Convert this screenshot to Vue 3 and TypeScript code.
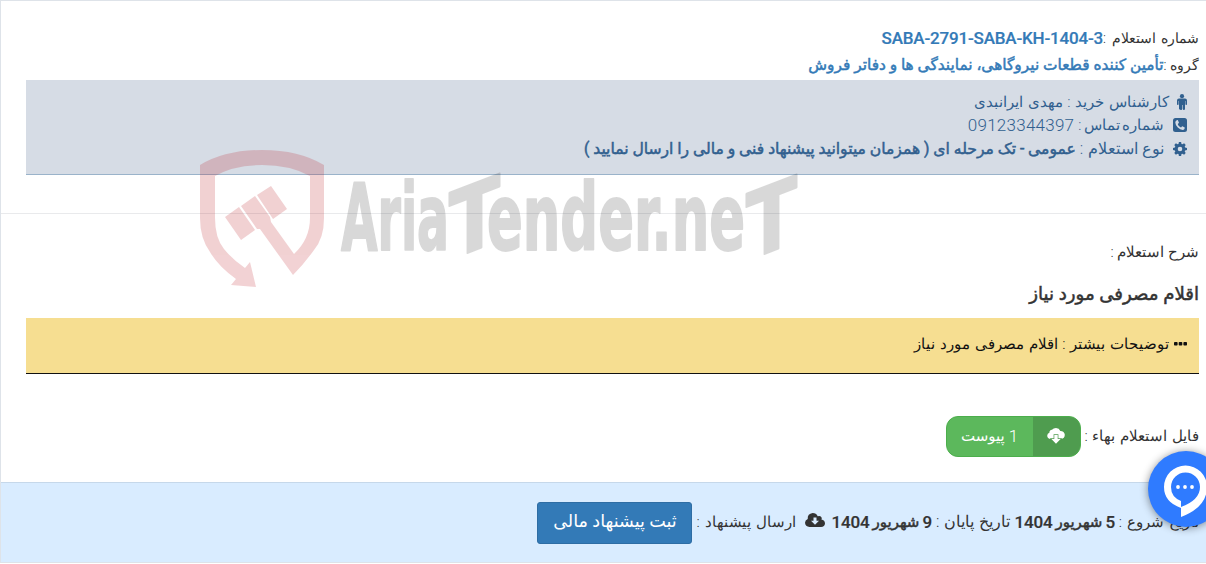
<script setup lang="ts">
import { ref } from 'vue'

const inquiryNumber = ref('SABA-2791-SABA-KH-1404-3')
const group = ref('تأمین کننده قطعات نیروگاهی، نمایندگی ها و دفاتر فروش')
const buyer = ref('مهدی ایرانبدی')
const phone = ref('09123344397')
const inquiryType = ref('عمومی - تک مرحله ای ( همزمان میتوانید پیشنهاد فنی و مالی را ارسال نمایید )')
const title = ref('اقلام مصرفی مورد نیاز')
const attachmentCount = ref(1)
</script>

<template>
  <div class="inquiry-page" dir="rtl">
    <section class="summary">
      <div class="row number-row">
        <span class="label l-number">شماره استعلام :</span>
        <bdi class="latin strong link code">{{ inquiryNumber }}</bdi>
      </div>
      <div class="row group-row">
        <span class="label l-group">گروه :</span>
        <span class="strong link group">{{ group }}</span>
      </div>
      <div class="info-box">
        <div class="row info-row">
          <svg class="icon-male" viewBox="0 0 10 16" width="10" height="16">
            <circle cx="5" cy="2.2" r="2.1" />
            <path d="M2 4.6h6q2 0 2 2v3.6q0 .8-.8.8t-.8-.8V7h-.4v8q0 1-1.1 1t-1.1-1v-4h-.6v4q0 1-1.1 1T2 15V7h-.4v3.2q0 .8-.8.8t-.8-.8V6.600q0-2 2-2z" />
          </svg>
          <span class="label l-buyer">کارشناس خرید : {{ buyer }}</span>
        </div>
        <div class="row info-row">
          <svg class="icon-phone" viewBox="0 0 14 14" width="14" height="14">
            <path fill-rule="evenodd" d="M2.500 0h9Q14 0 14 2.500v9q0 2.500-2.500 2.500h-9Q0 14 0 11.500v-9Q0 0 2.500 0zM4.200 2.100Q2.300 2.700 2.300 4.500q.1 2.700 2.500 5t5 2.400q1.600-.2 2-2l-.1-.5-2.200-1.200q-.4-.1-1.400 1.200-.6.200-2-1.100T4.800 6.100q0-.3 1-1.200.2-.3.100-.5L4.900 2.300q-.1-.3-.7-.2z" />
          </svg>
          <span class="label l-phone">شماره تماس :</span>
          <span class="latin phone">{{ phone }}</span>
        </div>
        <div class="row info-row">
          <svg class="icon-cog" viewBox="0 0 14 14" width="14" height="14">
            <path fill-rule="evenodd" d="M5.900 0h2.200l.4 1.900 1 .4 1.600-1 1.600 1.600-1 1.600.4 1 1.900.4v2.200l-1.900.4-.4 1 1 1.600-1.600 1.600-1.600-1-1 .4-.4 1.900H5.900l-.4-1.900-1-.4-1.600 1-1.600-1.600 1-1.600-.4-1L0 8.100V5.900l1.900-.4.4-1-1-1.600 1.600-1.600 1.600 1 1-.4zM7 4.700a2.300 2.300 0 1 0 0 4.600 2.300 2.300 0 0 0 0-4.600z" />
          </svg>
          <span class="label l-type">نوع استعلام :</span>
          <span class="strong type">{{ inquiryType }}</span>
        </div>
      </div>
    </section>

    <section class="description">
      <div class="row desc-row"><span class="label l-desc">شرح استعلام :</span></div>
      <h4>{{ title }}</h4>
      <div class="row note-box">
        <svg class="icon-dots" viewBox="0 0 13 4" width="13" height="4">
          <rect width="3.600" height="3.600" rx=".8" />
          <rect x="4.700" width="3.600" height="3.600" rx=".8" />
          <rect x="9.400" width="3.600" height="3.600" rx=".8" />
        </svg>
        <span class="label l-note">توضیحات بیشتر : {{ title }}</span>
      </div>
      <div class="row file-row">
        <span class="label l-file">فایل استعلام بهاء :</span>
        <button type="button" class="attachment">
          <span class="attachment-icon">
            <svg viewBox="0 0 18 16" width="18" height="16">
              <path d="M3.800 11Q.3 10.700.2 7.800.3 5.300 2.400 4.800 2.300 2.200 5 1.800 6.400.1 9 .1q3.200.1 4.300 2.800 4.100.2 4.500 3.900-.1 3.800-3.800 4.200z" />
              <path class="arrow" d="M7.300 7h3.400v4h2.900L9 15.800 4.400 11h2.900z" />
            </svg>
          </span>
          <span class="attachment-text"><span class="latin">{{ attachmentCount }}</span><span class="persian">پیوست</span></span>
        </button>
      </div>
    </section>

    <footer class="row">
      <span class="label l-start">تاریخ شروع :</span>
      <span class="date"><b class="latin">5</b><b class="month">شهریور</b><b class="latin">1404</b></span>
      <span class="label l-end">تاریخ پایان :</span>
      <span class="date"><b class="latin">9</b><b class="month">شهریور</b><b class="latin">1404</b></span>
      <svg class="icon-cloud" viewBox="0 0 20 14" width="20" height="14">
        <path fill-rule="evenodd" d="M4.500 14Q.3 13.700 0 9.800q.1-2.700 2.700-3.900Q2.400.7 7.700 0q3.500 0 5 3.300 3-1.300 4 1.400.2.900-.3 1.800Q19.900 7.300 20 10.400 19.700 13.800 16 14zM8.500 4.500v3.300H6l4 4 4-4h-2.500V4.500z" />
      </svg>
      <span class="label l-send">ارسال پیشنهاد :</span>
      <button type="button" class="submit"><span>ثبت پیشنهاد مالی</span></button>
    </footer>

    <svg class="watermark" viewBox="190 140 620 155" width="620" height="155" direction="ltr">
      <g class="shield">
        <path d="M200 165Q225 150 262 150T324 165V218Q324 238 314 250 304 264 293 275L260 229 257 229 241 206 255 196 270 217 271 222 294 254Q310 239 310 218V176Q290 165 262 165T215 176V218Q215 238 224 249 233 260 245 268L250 262 256 287 231 285 236 279Q218 266 210 252 200 238 200 218z" />
        <path d="M225 217 239 207 255 230 241 240zM257 195 271 186 287 209 273 219z" />
      </g>
      <g class="wordmark">
        <text x="341" y="250" textLength="108" lengthAdjust="spacingAndGlyphs">Aria</text>
        <text transform="translate(449 260) skewY(-21)" textLength="51" lengthAdjust="spacingAndGlyphs">T</text>
        <text x="487" y="250" textLength="258" lengthAdjust="spacingAndGlyphs">ender.ne</text>
        <text transform="translate(746 261) skewY(-21)" textLength="51" lengthAdjust="spacingAndGlyphs">T</text>
      </g>
    </svg>

    <div class="chat">
      <svg viewBox="0 0 76 76" width="76" height="76">
        <path fill-rule="evenodd" d="M33 57Q16 51 16 36A21.500 21.500 0 0 1 59 36Q59 56 33 66zM33 50V56Q52 49 52 36A14.500 14.500 0 0 0 23 36Q23 46 33 50z" />
        <circle cx="30" cy="36" r="1.900" />
        <circle cx="37" cy="36" r="1.900" />
        <circle cx="44" cy="36" r="1.900" />
      </svg>
    </div>
  </div>
</template>

<style>
body {
  background: #fff;
  overflow: hidden;
}
</style>

<style scoped>
.inquiry-page {
  position: relative;
  width: 1206px;
  height: 563px;
  box-sizing: border-box;
  overflow: hidden;
  border-top: 1px solid #dee3e9;
  border-left: 1px solid #dee3e9;
  font-family: Roboto, "DejaVu Sans", sans-serif;
  font-size: 15px;
  color: #333;
}

.row {
  display: flex;
  align-items: center;
  white-space: nowrap;
}

.row > * {
  flex-shrink: 0;
}

svg {
  fill: currentColor;
}

.label {
  font-weight: 300;
}

.l-number,
.l-group {
  font-size: 14.2px;
}

.l-number {
  word-spacing: 2px;
}

.l-phone {
  font-size: 14.5px;
  word-spacing: -1.2px;
}

.l-start,
.l-send {
  font-size: 15.4px;
  word-spacing: 1.2px;
}

.l-buyer,
.l-note,
.l-file {
  font-size: 15.4px;
  word-spacing: 1px;
}

.l-type,
.l-end {
  font-size: 16px;
}

.l-type {
  word-spacing: 0.5px;
}

.l-end {
  word-spacing: 1.2px;
}

.strong,
.month,
h4 {
  font-weight: 400;
  -webkit-text-stroke: 0.5px currentColor;
}

.group {
  font-size: 15.4px;
}

.latin {
  font-size: 17px;
}

.code,
b.latin {
  font-weight: 500;
  letter-spacing: -0.18px;
  -webkit-text-stroke: 0.2px currentColor;
}

.link {
  color: #337ab7;
}

.summary {
  height: 213px;
  box-sizing: border-box;
  padding: 23px 7px 0 25px;
  border-bottom: 1px solid #e9eaec;
}

.number-row {
  height: 28px;
}

.group-row {
  height: 26px;
  margin-bottom: 2px;
}

.info-box {
  height: 95px;
  box-sizing: border-box;
  padding: 10px 12px;
  color: #31608f;
  background: #d6dce5;
  border-bottom: 1px solid #9ab3ca;
}

.info-row {
  height: 23.5px;
}

.icon-male {
  margin-left: 8px;
}

.icon-phone,
.icon-cog {
  margin-left: 9px;
}

.phone {
  margin-right: 4px;
  font-weight: 300;
  letter-spacing: 0.25px;
}

.type {
  margin-right: 4px;
  font-size: 15.6px;
}

.description {
  height: 268px;
  padding: 0 7px 0 25px;
}

.desc-row {
  height: 76px;
}

h4 {
  margin: 0;
  height: 28px;
  line-height: 8px;
  font-size: 18.2px;
}

.note-box {
  height: 56px;
  box-sizing: border-box;
  padding: 0 12px 4px;
  color: #111;
  background: #f6de91;
  border-bottom: 1px solid #111;
}

.icon-dots {
  margin-left: 5px;
}

.file-row {
  height: 124px;
}

.attachment {
  display: flex;
  width: 135px;
  height: 41px;
  margin-right: 4px;
  padding: 0;
  overflow: hidden;
  color: #fff;
  font-family: inherit;
  background: #5cb85c;
  border: 1px solid #4cae4c;
  border-radius: 12px;
}

.attachment-icon {
  display: flex;
  align-items: center;
  justify-content: center;
  width: 47px;
  height: 100%;
  background: #4f9c4f;
}

.attachment-icon svg {
  overflow: visible;
}

.arrow {
  stroke: #4f9c4f;
  stroke-width: 1.4px;
  paint-order: stroke;
}

.attachment-text {
  display: flex;
  flex: 1;
  align-items: center;
  justify-content: center;
  gap: 4px;
  height: 100%;
}

.attachment-text .latin {
  font-weight: 300;
}

.persian {
  font-size: 15px;
}

footer {
  height: 81px;
  box-sizing: border-box;
  padding: 0 7px 2px;
  background: #d9ecff;
  border-top: 1px solid #c6d8ea;
  border-bottom: 1px solid #dee3e9;
}

.date {
  display: flex;
  align-items: center;
  gap: 3px;
  margin: 0 4px;
}

.icon-cloud {
  margin: 0 3px 4px 9px;
}

.submit {
  width: 155px;
  height: 42px;
  margin-top: 2px;
  margin-right: 4px;
  padding: 0 0 4px;
  color: #fff;
  font-family: inherit;
  font-size: 17.6px;
  background: #337ab7;
  border: 1px solid #2e6da4;
  border-radius: 3px;
}

.watermark {
  position: absolute;
  top: 139px;
  left: 189px;
  overflow: visible;
  pointer-events: none;
}

.shield {
  fill: #b90f19;
  opacity: 0.19;
}

.wordmark {
  fill: #000;
  stroke: #000;
  stroke-width: 2px;
  stroke-linejoin: round;
  opacity: 0.15;
  font-family: "DejaVu Sans Condensed", "DejaVu Sans", sans-serif;
  font-size: 92px;
  font-weight: 700;
}

.chat {
  position: absolute;
  top: 450px;
  left: 1147px;
  width: 76px;
  height: 76px;
  color: #fff;
  background: #2f7bff;
  border-radius: 50%;
  box-shadow: 0 1px 8px rgba(0, 0, 0, 0.45);
}
</style>
